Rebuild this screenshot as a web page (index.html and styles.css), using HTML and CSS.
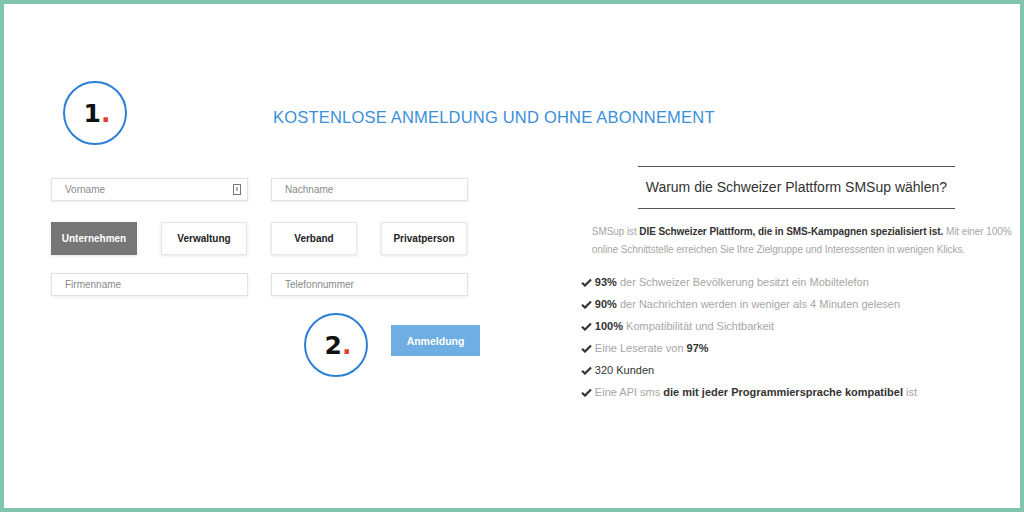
FILE: index.html
```html
<!DOCTYPE html>
<html lang="de">
<head>
    <meta charset="UTF-8">
    <title>SMSup Anmeldung</title>
    <link rel="stylesheet" href="styles.css">
</head>
<body>
<div class="frame">
    <div class="header">
        <div class="step stepOne">1<span class="dot">.</span></div>
        <h1 class="title">KOSTENLOSE ANMELDUNG UND OHNE ABONNEMENT</h1>
    </div>
    <div class="content">
        <form class="form">
            <div class="field wide">
                <span class="placeholder">Vorname</span>
                <svg class="cardIcon" width="8" height="11" viewBox="0 0 8 11">
                    <rect x="0.5" y="0.5" width="7" height="10" fill="none" stroke="#777" stroke-width="1"/>
                    <line x1="4" y1="3" x2="4" y2="7" stroke="#777" stroke-width="1.2"/>
                </svg>
            </div>
            <div class="field wide"><span class="placeholder">Nachname</span></div>

            <div class="choice active">Unternehmen</div>
            <div class="choice">Verwaltung</div>
            <div class="choice">Verband</div>
            <div class="choice">Privatperson</div>

            <div class="field wide lower"><span class="placeholder">Firmenname</span></div>
            <div class="field wide lower"><span class="placeholder">Telefonnummer</span></div>

            <div class="submitRow">
                <div class="step">2<span class="dot">.</span></div>
                <div class="submit">Anmeldung</div>
            </div>
        </form>

        <div class="why">
            <div class="whyTitle">Warum die Schweizer Plattform SMSup wählen?</div>
            <p class="intro">
                SMSup ist <b>DIE Schweizer Plattform, die in SMS-Kampagnen spezialisiert ist.</b> Mit einer 100%<br>
                online Schnittstelle erreichen Sie Ihre Zielgruppe und Interessenten in wenigen Klicks.
            </p>
            <ul class="facts">
                <li><svg class="check" viewBox="0 0 12 10"><path d="M1 5.2 L4.3 8.4 L11 1.6" fill="none" stroke="#333" stroke-width="2.4"/></svg> <b>93%</b> der Schweizer Bevölkerung besitzt ein Mobiltelefon</li>
                <li><svg class="check" viewBox="0 0 12 10"><path d="M1 5.2 L4.3 8.4 L11 1.6" fill="none" stroke="#333" stroke-width="2.4"/></svg> <b>90%</b> der Nachrichten werden in weniger als 4 Minuten gelesen</li>
                <li><svg class="check" viewBox="0 0 12 10"><path d="M1 5.2 L4.3 8.4 L11 1.6" fill="none" stroke="#333" stroke-width="2.4"/></svg> <b>100%</b> Kompatibilität und Sichtbarkeit</li>
                <li><svg class="check" viewBox="0 0 12 10"><path d="M1 5.2 L4.3 8.4 L11 1.6" fill="none" stroke="#333" stroke-width="2.4"/></svg> Eine Leserate von <b>97%</b></li>
                <li><svg class="check" viewBox="0 0 12 10"><path d="M1 5.2 L4.3 8.4 L11 1.6" fill="none" stroke="#333" stroke-width="2.4"/></svg> <span class="dark">320 Kunden</span></li>
                <li><svg class="check" viewBox="0 0 12 10"><path d="M1 5.2 L4.3 8.4 L11 1.6" fill="none" stroke="#333" stroke-width="2.4"/></svg> Eine API sms <b>die mit jeder Programmiersprache kompatibel</b> ist</li>
            </ul>
        </div>
    </div>
</div>
</body>
</html>
```

FILE: styles.css
```css
* {
    box-sizing: border-box;
}

html, body {
    margin: 0;
    padding: 0;
    background: #fff;
}

body {
    font-family: "Liberation Sans", Arial, sans-serif;
}

.frame {
    width: 1024px;
    height: 512px;
    border: 4px solid #7fc6ab;
    padding: 0 8px 0 47px;
}

.header {
    display: flex;
    align-items: center;
    padding-top: 77px;
}

.step {
    flex: none;
    width: 64px;
    height: 64px;
    border: 2px solid #2b7fd6;
    border-radius: 50%;
    display: flex;
    align-items: center;
    justify-content: center;
    font-family: "DejaVu Sans", sans-serif;
    font-weight: bold;
    font-size: 25px;
    color: #111;
    padding-left: 4px;
}

.stepOne {
    margin-left: 12px;
}

.dot {
    color: #e53b2f;
}

.title {
    margin: 0 0 0 146px;
    font-weight: normal;
    font-size: 16.5px;
    color: #3b8fd9;
    letter-spacing: 0.2px;
    padding-top: 9px;
}

.content {
    display: flex;
    align-items: flex-start;
    margin-top: 21px;
}

.form {
    display: grid;
    grid-template-columns: repeat(4, 86px);
    column-gap: 24px;
    margin: 12px 0 0 0;
    width: 532px;
    align-content: start;
}

.field {
    height: 23px;
    border: 1px solid #e2e2e2;
    box-shadow: 0 1px 3px rgba(0, 0, 0, 0.08);
    background: #fff;
    display: flex;
    align-items: center;
    justify-content: space-between;
    padding: 0 6px 0 13px;
    font-size: 10px;
    color: #8a8a8a;
}

.wide {
    grid-column: span 2;
    width: 197px;
}

.lower {
    margin-top: 18px;
}

.choice {
    margin-top: 21px;
    height: 33px;
    border: 1px solid #e6e6e6;
    box-shadow: 0 1px 3px rgba(0, 0, 0, 0.1);
    display: flex;
    align-items: center;
    justify-content: center;
    font-size: 10px;
    font-weight: bold;
    color: #222;
}

.choice.active {
    background: #767676;
    border-color: #767676;
    color: #fff;
}

.submitRow {
    grid-column: 1 / -1;
    display: flex;
    align-items: center;
    margin-top: 17px;
    padding-left: 253px;
}

.submit {
    flex: none;
    margin: -9px 0 0 23px;
    width: 89px;
    height: 31px;
    background: #6eaee2;
    color: #fff;
    font-size: 10.5px;
    font-weight: bold;
    display: flex;
    align-items: center;
    justify-content: center;
}

.why {
    width: 433px;
    color: #a6a6a6;
}

.why b {
    color: #333;
}

.whyTitle {
    width: 317px;
    margin: 0 auto;
    border-top: 1px solid #555;
    border-bottom: 1px solid #555;
    text-align: center;
    font-size: 14px;
    color: #333;
    height: 43px;
    line-height: 40px;
}

.intro {
    margin: 14px 0 0 0;
    padding-left: 11px;
    line-height: 18px;
    white-space: nowrap;
    font-size: 10px;
    letter-spacing: -0.08px;
}

.facts {
    list-style: none;
    margin: 12px 0 0 0;
    padding: 0;
    font-size: 11px;
}

.facts li {
    height: 22px;
    line-height: 22px;
    white-space: nowrap;
}

.check {
    width: 11px;
    height: 9px;
    vertical-align: -1px;
}

.dark {
    color: #333;
}
```
